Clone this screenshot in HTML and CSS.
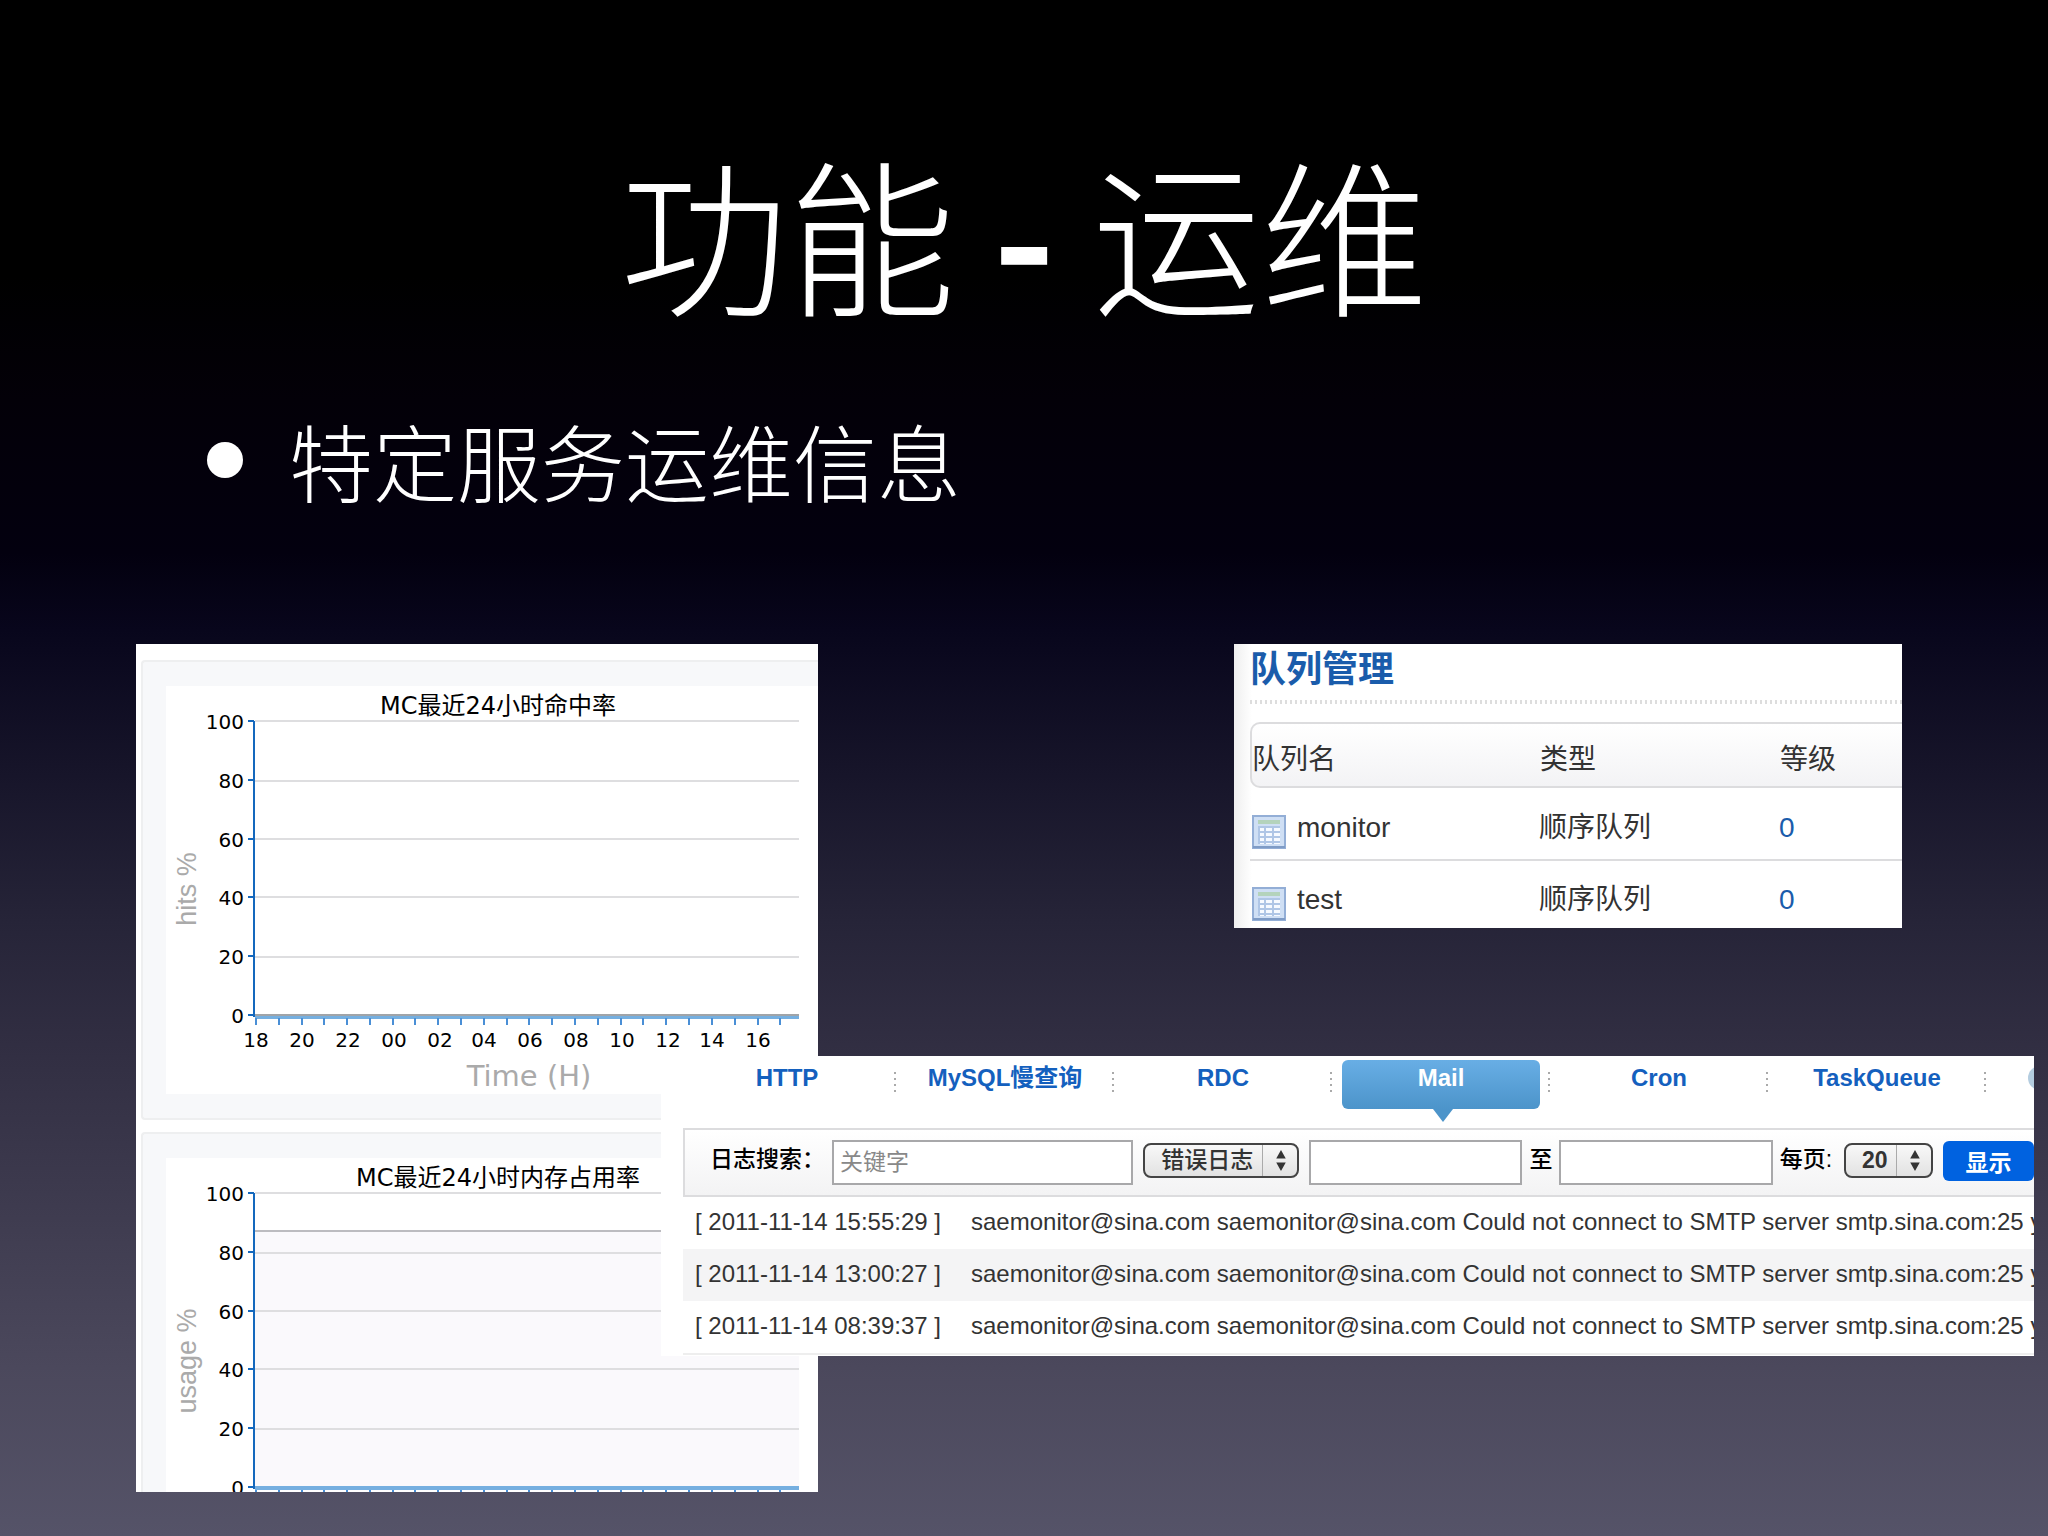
FILE: index.html
```html
<!DOCTYPE html>
<html lang="zh-CN">
<head>
<meta charset="utf-8">
<title>功能 - 运维</title>
<link rel="stylesheet" href="styles.css">
</head>
<body>
<main class="slide">
  <h1 class="slide-title">功能 <b>-</b> 运维</h1>
  <ul class="points"><li>特定服务运维信息</li></ul>

  <div class="stage">
    <section class="charts" aria-label="Memcache">
      <div class="chart-frame">
        <svg class="chart" viewBox="0 0 652 408" role="img" aria-label="MC最近24小时命中率">
          <text class="chart-title" x="332" y="28">MC最近24小时命中率</text>
          <path class="grid" d="M89 35H633M89 95H633M89 153H633M89 211H633M89 271H633"/>
          <path class="base" d="M89 331H633"/>
          <path class="zero" d="M89 329H633"/>
          <path class="xticks" d="M90 332v7M113 332v7M136 332v7M158 332v7M181 332v7M204 332v7M227 332v7M249 332v7M272 332v7M295 332v7M318 332v7M341 332v7M363 332v7M386 332v7M409 332v7M432 332v7M455 332v7M477 332v7M500 332v7M523 332v7M546 332v7M569 332v7M592 332v7M614 332v7"/>
          <path class="axis" d="M88 35V331M82 35h6M82 94h6M82 153h6M82 211h6M82 270h6M82 329h6"/>
          <g class="ynum"><text x="78" y="43">100</text><text x="78" y="102">80</text><text x="78" y="161">60</text><text x="78" y="219">40</text><text x="78" y="278">20</text><text x="78" y="337">0</text></g>
          <g class="xnum"><text x="90" y="361">18</text><text x="136" y="361">20</text><text x="182" y="361">22</text><text x="228" y="361">00</text><text x="274" y="361">02</text><text x="318" y="361">04</text><text x="364" y="361">06</text><text x="410" y="361">08</text><text x="456" y="361">10</text><text x="502" y="361">12</text><text x="546" y="361">14</text><text x="592" y="361">16</text></g>
          <text class="yname" transform="translate(30 203) rotate(-90)">hits %</text>
          <text class="xname" x="363" y="400">Time (H)</text>
        </svg>
      </div>
      <div class="chart-frame">
        <svg class="chart" viewBox="0 0 652 408" role="img" aria-label="MC最近24小时内存占用率">
          <text class="chart-title" x="332" y="28">MC最近24小时内存占用率</text>
          <path class="area" d="M89 73H633V329H89z"/>
          <path class="grid" d="M89 35H633M89 95H633M89 153H633M89 211H633M89 271H633"/>
          <path class="usage" d="M89 73H633"/>
          <path class="base" d="M89 330H633"/>
          <path class="xticks" d="M90 332v7M113 332v7M136 332v7M158 332v7M181 332v7M204 332v7M227 332v7M249 332v7M272 332v7M295 332v7M318 332v7M341 332v7M363 332v7M386 332v7M409 332v7M432 332v7M455 332v7M477 332v7M500 332v7M523 332v7M546 332v7M569 332v7M592 332v7M614 332v7"/>
          <path class="axis" d="M88 35V331M82 35h6M82 94h6M82 153h6M82 211h6M82 270h6M82 329h6"/>
          <g class="ynum"><text x="78" y="43">100</text><text x="78" y="102">80</text><text x="78" y="161">60</text><text x="78" y="219">40</text><text x="78" y="278">20</text><text x="78" y="337">0</text></g>
          <text class="yname" transform="translate(30 203) rotate(-90)">usage %</text>
        </svg>
      </div>
    </section>

    <section class="queues">
      <h2 class="queues-title">队列管理</h2>
      <table class="queue-table">
        <thead><tr><th>队列名</th><th>类型</th><th>等级</th></tr></thead>
        <tbody>
          <tr><td><span class="queue-name"><svg class="sheet" viewBox="0 0 34 34" aria-hidden="true"><use href="#sheet"/></svg>monitor</span></td><td>顺序队列</td><td><a href="#monitor">0</a></td></tr>
          <tr><td><span class="queue-name"><svg class="sheet" viewBox="0 0 34 34" aria-hidden="true"><use href="#sheet"/></svg>test</span></td><td>顺序队列</td><td><a href="#test">0</a></td></tr>
        </tbody>
      </table>
    </section>

    <section class="logs">
      <nav class="tabs">
        <a href="#http">HTTP</a>
        <a href="#mysql">MySQL慢查询</a>
        <a href="#rdc">RDC</a>
        <a href="#mail" class="active" aria-current="page"><span>Mail</span></a>
        <a href="#cron">Cron</a>
        <a href="#taskqueue">TaskQueue</a>
        <i class="more" aria-hidden="true"></i>
      </nav>
      <form class="search">
        <label class="search-label" for="keyword">日志搜索：</label>
        <input class="keyword" id="keyword" type="text" placeholder="关键字">
        <span class="picker"><select aria-label="日志类型"><option>错误日志</option></select><svg viewBox="0 0 10 22" aria-hidden="true"><path d="M0 9 5 0l5 9zM0 13h10l-5 9z"/></svg></span>
        <input class="date" id="from" type="text" aria-label="开始时间">
        <label for="to">至</label>
        <input class="date" id="to" type="text">
        <label class="size-label" for="size">每页:</label>
        <span class="picker picker-small"><select id="size"><option>20</option></select><svg viewBox="0 0 10 22" aria-hidden="true"><path d="M0 9 5 0l5 9zM0 13h10l-5 9z"/></svg></span>
        <button type="button">显示</button>
      </form>
      <ul class="entries">
        <li><time>[ 2011-11-14 15:55:29 ]</time>saemonitor@sina.com saemonitor@sina.com Could not connect to SMTP server smtp.sina.com:25 y</li>
        <li><time>[ 2011-11-14 13:00:27 ]</time>saemonitor@sina.com saemonitor@sina.com Could not connect to SMTP server smtp.sina.com:25 y</li>
        <li><time>[ 2011-11-14 08:39:37 ]</time>saemonitor@sina.com saemonitor@sina.com Could not connect to SMTP server smtp.sina.com:25 y</li>
      </ul>
    </section>
  </div>
</main>
<svg class="defs" aria-hidden="true">
  <symbol id="sheet" viewBox="0 0 34 34">
    <rect x="1" y="1" width="32" height="32" fill="#cfdff4" stroke="#93aed6" stroke-width="2"/>
    <rect x="6" y="5" width="22" height="4" fill="#b4d3bc"/>
    <rect x="6" y="11" width="22" height="18" fill="#f6faff"/>
    <path d="M6 12h22M6 17h22M6 22h22M6 27h22M7 11v18M13 11v18M21 11v18" stroke="#afc6e6" stroke-width="2"/>
    <path d="M1 32h32" stroke="#7f9cc6" stroke-width="2"/>
  </symbol>
</svg>
</body>
</html>
```
FILE: styles.css
```css
* { box-sizing: border-box; }

body {
  margin: 0;
  background: #000;
  font-family: "Liberation Sans", "Noto Sans CJK SC", sans-serif;
  color: #333;
}

a { color: #1a5cab; text-decoration: none; }

.slide {
  min-height: 100vh;
  padding: 136px 14px 44px 136px;
  background: linear-gradient(#000 0%, #000 18%, #030008 26%, #03000f 36%, #08061c 41%, #262438 60%, #312e42 68%, #4b485c 89%, #555368 100%);
  overflow: hidden;
}

.slide-title {
  margin: 0 122px 0 0;
  font: 300 168px/190px "Noto Sans CJK SC", sans-serif;
  text-align: center;
  color: #fff;
}

.slide-title b { font-weight: 700; }

.points {
  margin: 86px 0 0;
  padding: 0 0 0 71px;
  list-style: none;
  font: 300 84px/96px "Noto Sans CJK SC", sans-serif;
  color: #fff;
}

.points li { display: flex; align-items: center; gap: 46px; }

.points li::before {
  content: "";
  width: 36px;
  height: 36px;
  border-radius: 50%;
  background: #fff;
}

.stage {
  position: relative;
  display: flex;
  justify-content: space-between;
  align-items: flex-start;
  margin-top: 136px;
  padding-right: 132px;
}

/* Cache charts */
.charts {
  width: 682px;
  height: 848px;
  padding: 16px 0 0 5px;
  background: #fff;
  overflow: hidden;
}

.chart-frame {
  height: 460px;
  margin-bottom: 12px;
  padding: 24px 0 0 23px;
  border: 2px solid #eeeff0;
  border-right: 0;
  border-radius: 4px 0 0 4px;
  background: #f7f8fa;
}

.chart {
  display: block;
  width: 652px;
  height: 408px;
  background: #fff;
  font-family: "DejaVu Sans", "Noto Sans CJK SC", sans-serif;
  font-size: 20px;
}

.chart path { fill: none; stroke-width: 2; }
.chart .grid { stroke: #dedee0; }
.chart .area { fill: #faf9fc; }
.chart .usage { stroke: #bcbcc0; }
.chart .base { stroke: #75afe0; stroke-width: 4; }
.chart .zero { stroke: #a0a4a8; }
.chart .axis { stroke: #1468bd; }
.chart .xticks { stroke: #4a8fd6; }
.chart-title { font-size: 24px; text-anchor: middle; }
.ynum { text-anchor: end; }
.xnum { text-anchor: middle; }
.xname, .yname { fill: #aaa; text-anchor: middle; }
.xname { font-size: 29px; }
.yname { font-family: "Liberation Sans", sans-serif; font-size: 27px; }

/* Queue list */
.queues {
  width: 668px;
  height: 284px;
  padding: 7px 0 0 16px;
  background: linear-gradient(90deg, #efefef, #fff 18px);
  overflow: hidden;
}

.queues-title {
  margin: 0 0 18px;
  padding-bottom: 15px;
  font-size: 36px;
  line-height: 38px;
  color: #1a5cab;
  background: repeating-linear-gradient(90deg, #ddd 0 2px, transparent 2px 5px) bottom / 100% 4px no-repeat;
}

.queue-table {
  width: 100%;
  border-spacing: 0;
  table-layout: fixed;
  font-size: 28px;
  line-height: 32px;
}

.queue-table th {
  height: 66px;
  padding: 9px 0 0 1px;
  border: solid #dcdcde;
  border-width: 2px 0;
  background: linear-gradient(#fff, #f3f3f5);
  font-weight: 400;
  text-align: left;
}

.queue-table th:first-child { width: 289px; padding-left: 0; border-left-width: 2px; border-radius: 10px 0 0 10px; }
.queue-table th:nth-child(2) { width: 240px; }
.queue-table td { height: 70px; padding: 8px 0 0; vertical-align: middle; }
.queue-table tr:first-child td { height: 73px; border-bottom: 2px solid #dcdcde; }
.queue-name { display: flex; align-items: center; gap: 11px; padding-left: 2px; }
.sheet { width: 34px; height: 34px; margin-top: 8px; }

/* Log viewer */
.logs {
  position: absolute;
  top: 412px;
  left: 525px;
  right: 0;
  height: 300px;
  padding-left: 22px;
  background: #fff;
  font-size: 24px;
  overflow: hidden;
}

.tabs {
  display: flex;
  height: 72px;
  margin-left: -5px;
}

.tabs a {
  flex: 0 0 218px;
  padding: 4px 10px 0;
  font-weight: 700;
  line-height: 36px;
  text-align: center;
  color: #1460be;
  background: repeating-linear-gradient(#aaa 0 2px, transparent 2px 6px) right 16px / 2px 24px no-repeat;
}

.tabs .active span {
  position: relative;
  display: block;
  height: 49px;
  border-radius: 6px;
  color: #fff;
  background: linear-gradient(#68aee5, #4c94ca);
}

.tabs .active span::after {
  content: "";
  position: absolute;
  top: 100%;
  left: 50%;
  margin-left: -8px;
  border: solid transparent;
  border-width: 13px 10px 0;
  border-top-color: #4c94ca;
}

.more {
  flex: 0 0 24px;
  height: 24px;
  margin: 10px 0 0 42px;
  border-radius: 50%;
  background: #b4cde0;
}

.search {
  display: flex;
  align-items: center;
  height: 69px;
  padding-left: 25px;
  border: solid #dcdcde;
  border-width: 2px 0 2px 2px;
  background: linear-gradient(#fff, #f3f3f4);
  font-size: 23px;
  color: #000;
}

.search label { font-weight: 500; white-space: nowrap; padding: 0 7px; margin-bottom: 12px; }
.search .search-label { flex: 0 0 122px; padding: 0; }
.search .size-label { padding-right: 2px; }

.search input {
  min-width: 0;
  height: 45px;
  padding: 4px 6px;
  border: 2px solid #a8a8aa;
  background: #fff;
  font: inherit;
}

.search input::placeholder { color: #888; }
.keyword { flex: 305 1 0; }
.date { flex: 211 1 0; }

.picker { position: relative; flex: 0 0 156px; margin: 0 10px 4px; }
.picker-small { flex-basis: 89px; }

.picker select {
  display: block;
  width: 100%;
  height: 35px;
  padding: 0 0 2px 16px;
  border: 2px solid #444;
  border-radius: 8px;
  appearance: none;
  background: linear-gradient(#aaa, #aaa) right 34px top / 1px 100% no-repeat, linear-gradient(#f8f8f8, #e2e2e2);
  font: 500 23px/28px "Liberation Sans", "Noto Sans CJK SC", sans-serif;
  color: #333;
}

.picker-small select { font-weight: 700; }
.picker svg { position: absolute; top: 7px; right: 13px; width: 10px; height: 21px; fill: #333; }

.search button {
  flex: 0 0 91px;
  height: 40px;
  margin-bottom: 3px;
  padding: 0;
  border: 0;
  border-radius: 6px;
  background: #0062e0;
  font: 700 23px/36px "Noto Sans CJK SC", sans-serif;
  color: #fff;
}

.entries {
  margin: 0;
  padding: 0;
  list-style: none;
  border-bottom: 2px solid #eee;
}

.entries li {
  display: flex;
  height: 52px;
  padding-left: 12px;
  line-height: 50px;
  white-space: nowrap;
}

.entries li:nth-child(even) { background: #f4f4f5; }
.entries time { flex: 0 0 276px; }

.defs { position: absolute; width: 0; height: 0; }
```
